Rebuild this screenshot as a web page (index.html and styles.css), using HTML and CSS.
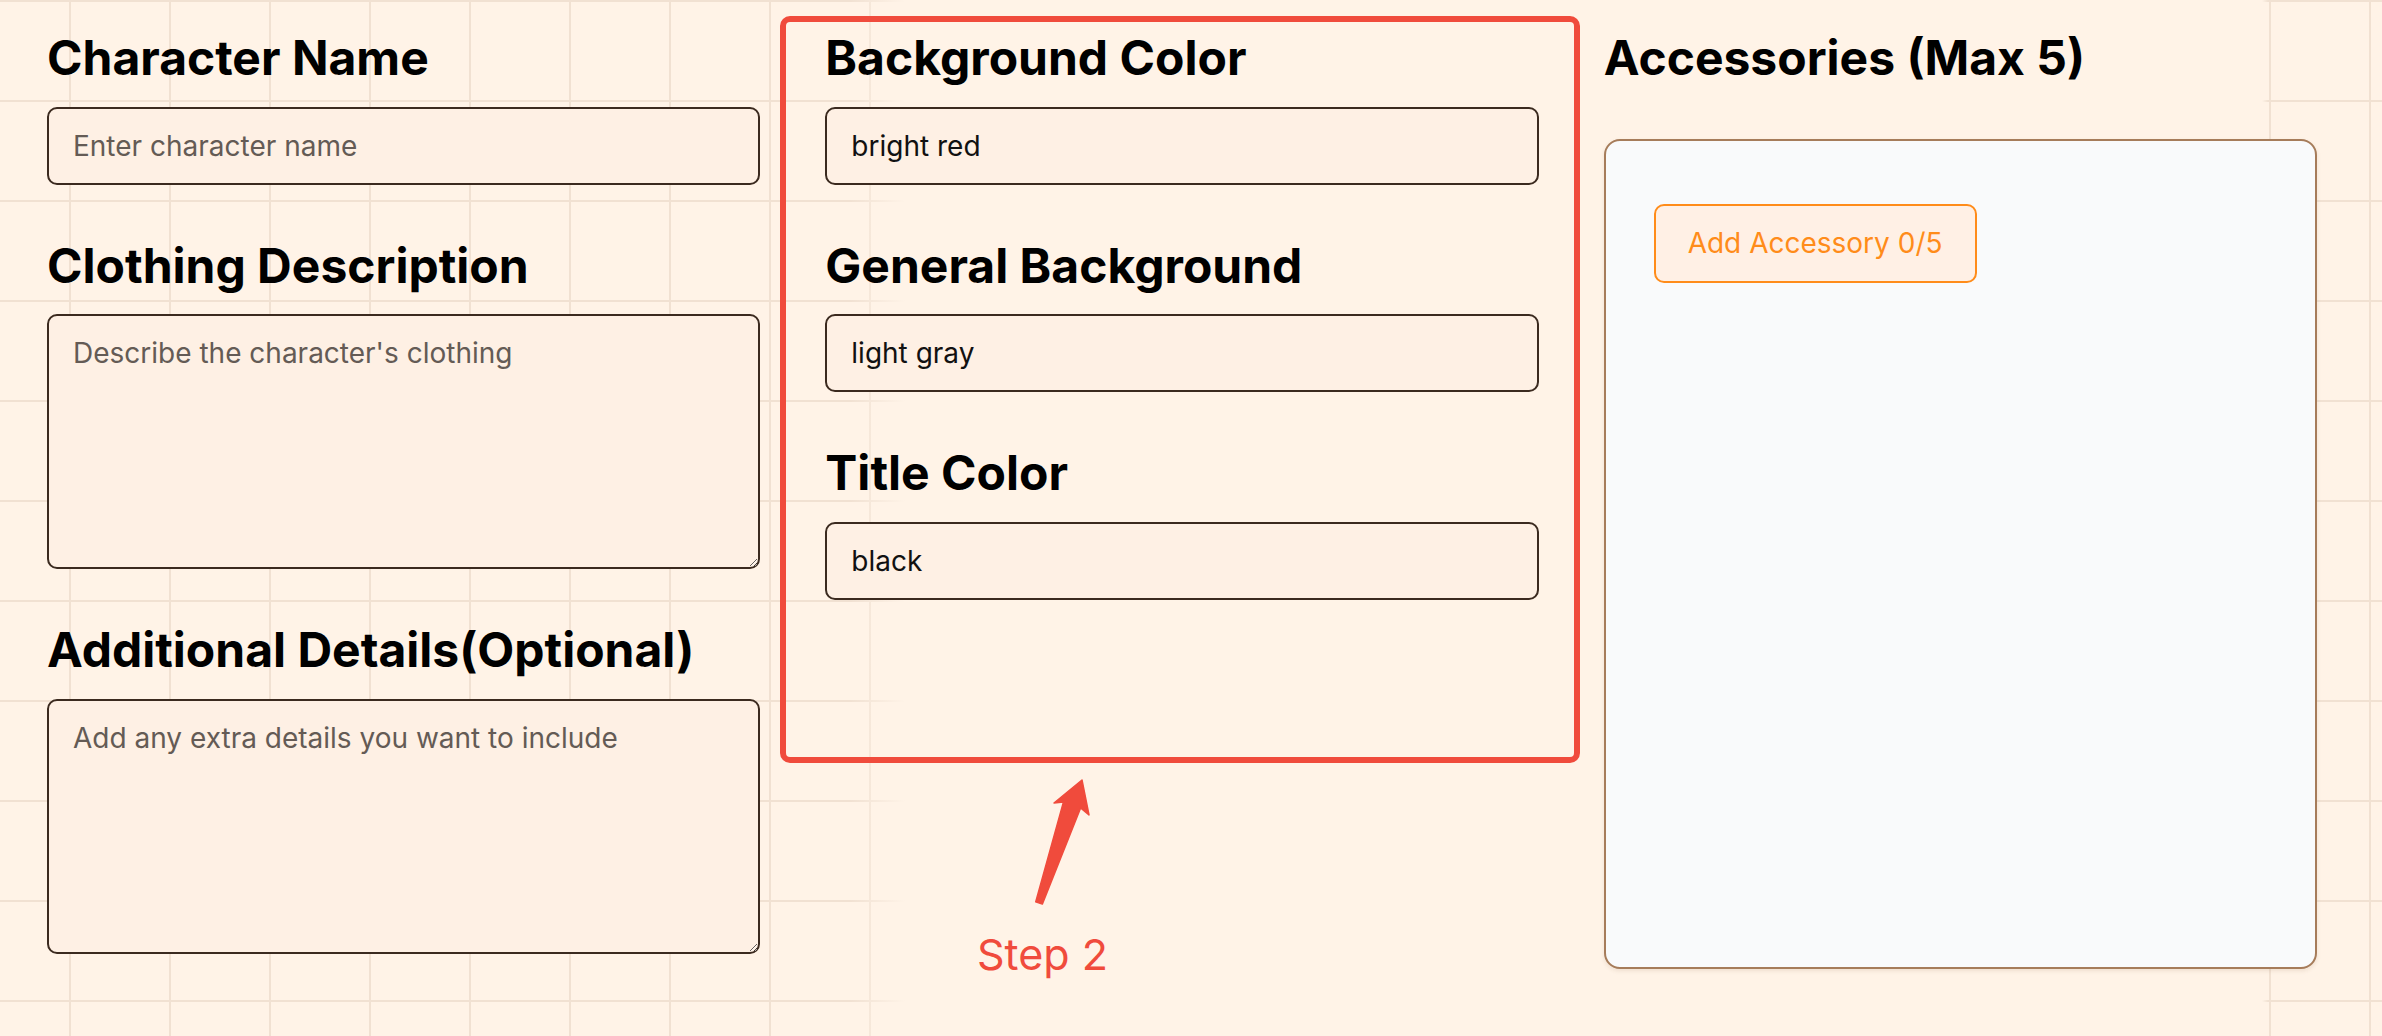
FILE: index.html
```html
<!DOCTYPE html>
<html lang="en">
<head>
    <meta charset="UTF-8">
    <meta name="viewport" content="width=device-width, initial-scale=1.0">
    <title>Character Builder</title>
    <link rel="stylesheet" href="styles.css">
</head>
<body>
<div class="page">
    <div class="column">
        <div class="field">
            <label class="field-title" for="characterName">Character Name</label>
            <input type="text" id="characterName" placeholder="Enter character name">
        </div>
        <div class="field">
            <label class="field-title" for="clothing">Clothing Description</label>
            <textarea id="clothing" placeholder="Describe the character's clothing"></textarea>
        </div>
        <div class="field">
            <label class="field-title" for="details">Additional Details(Optional)</label>
            <textarea id="details" placeholder="Add any extra details you want to include"></textarea>
        </div>
    </div>

    <div class="column">
        <div class="field">
            <label class="field-title" for="bgColor">Background Color</label>
            <input type="text" id="bgColor" value="bright red">
        </div>
        <div class="field">
            <label class="field-title" for="generalBg">General Background</label>
            <input type="text" id="generalBg" value="light gray">
        </div>
        <div class="field">
            <label class="field-title" for="titleColor">Title Color</label>
            <input type="text" id="titleColor" value="black">
        </div>
    </div>

    <div class="column">
        <div class="field-title accessories-title">Accessories (Max 5)</div>
        <div class="accessory-box">
            <button type="button" class="add-accessory">Add Accessory 0/5</button>
        </div>
    </div>

    <!-- step annotation -->
    <div class="step-box"></div>
    <svg class="step-arrow" width="66" height="136" viewBox="0 0 66 136">
        <path d="M52 5 L59 40 L50.6 32.9 L12.3 129.1 L5.7 126.9 L33.4 27.1 L24 28 Z"/>
    </svg>
    <div class="step-label">Step 2</div>
</div>
</body>
</html>
```

FILE: styles.css
```css
body {
    margin: 0;
    padding: 0;
    font-family: Inter, "Noto Sans", sans-serif;
    color: #000;
    background-color: #fff3e7;
}
.page {
    position: relative;
    height: 100vh;
    box-sizing: border-box;
    padding: 29px 65px 67px 47px;
    display: grid;
    grid-template-columns: repeat(3, 1fr);
    column-gap: 65px;
    background-color: #fff3e7;
    /* grid paper, hidden in the middle */
    background-image:
        linear-gradient(to right, rgba(255, 243, 231, 0) 850px, #fff3e7 905px, #fff3e7 2262px, rgba(255, 243, 231, 0) 2268px),
        linear-gradient(#f1e1d2 2px, transparent 2px),
        linear-gradient(90deg, #f1e1d2 2px, transparent 2px);
    background-size: 100% 100%, 100px 100px, 100px 100px;
    background-position: 0 0, 0 0, 69px 0;
}
.column {
    display: flex;
    flex-direction: column;
    min-width: 0;
    min-height: 0;
}
.field {
    display: flex;
    flex-direction: column;
    margin-bottom: 52px;
}
.field:last-child {
    margin-bottom: 0;
}
.field-title {
    display: block;
    font-size: 48px;
    font-weight: 700;
    line-height: 1.2;
    margin-bottom: 20px;
}
input[type="text"], textarea {
    display: block;
    width: 100%;
    box-sizing: border-box;
    font-family: Inter, "Noto Sans", sans-serif;
    font-size: 28px;
    line-height: 42px;
    color: #111;
    background-color: #fef0e4;
    border: 2px solid #3b2a1f;
    border-radius: 10px;
    padding: 16px 24px;
    margin: 0;
    outline: none;
}
input[type="text"] {
    height: 78px;
}
textarea {
    height: 255px;
}
input::placeholder, textarea::placeholder {
    color: #645b55;
}
.accessories-title {
    margin-bottom: 52px;
}
.accessory-box {
    flex: 1;
    background-color: #f9fafb;
    border: 2px solid #a67c5a;
    border-radius: 16px;
    box-shadow: 0 2px 4px rgba(120, 80, 40, 0.12);
    padding: 63px 48px;
}
.add-accessory {
    height: 79px;
    padding: 0 32px;
    font-family: Inter, "Noto Sans", sans-serif;
    font-size: 28px;
    color: #ff8c1a;
    background-color: #fff0e5;
    border: 2px solid #ff8c1a;
    border-radius: 10px;
    cursor: pointer;
}
.step-box {
    position: absolute;
    left: 780px;
    top: 16px;
    width: 800px;
    height: 747px;
    box-sizing: border-box;
    border: 6px solid #f04b3c;
    border-radius: 10px;
    pointer-events: none;
}
.step-arrow {
    position: absolute;
    left: 1030px;
    top: 775px;
    fill: #f04b3c;
    stroke: #f04b3c;
    stroke-width: 1.5;
    stroke-linejoin: round;
}
.step-label {
    position: absolute;
    left: 977px;
    top: 933px;
    font-size: 43px;
    line-height: 1;
    color: #f04b3c;
}
```
